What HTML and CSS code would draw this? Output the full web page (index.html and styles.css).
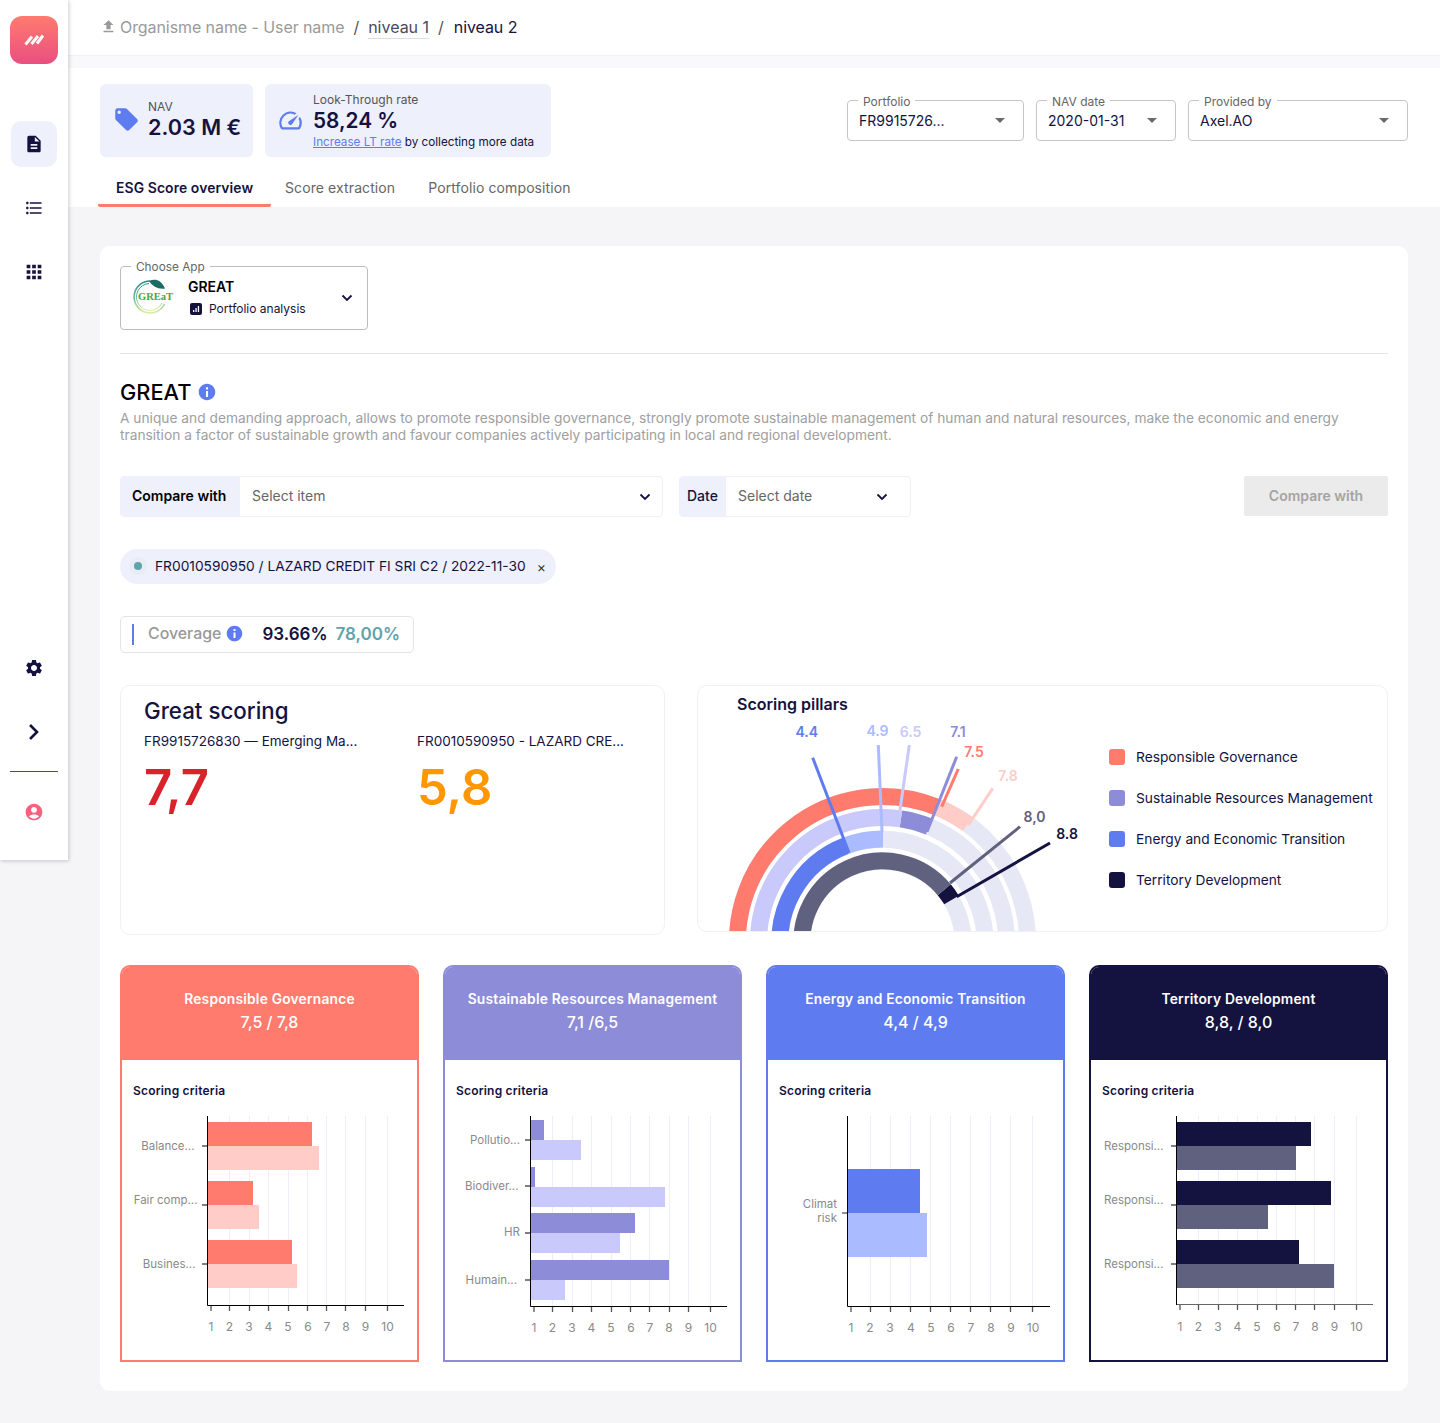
FILE: index.html
```html
<!DOCTYPE html>
<html lang="en">
<head>
<meta charset="utf-8">
<title>ESG Score overview</title>
<link rel="stylesheet" href="styles.css">
</head>
<body>
<div class="app">
  <aside class="sidebar">
    <div class="side-top">
      <div class="logo">
        <svg viewBox="0 0 48 48" width="48" height="48"><path class="logo-mark" d="M15.500 28.500L22 20.500M21.500 28L28 20M27 27.500L33 19.500"/></svg>
      </div>
      <nav class="side-nav">
        <a class="side-item active"><svg class="ico20" viewBox="0 0 24 24"><path d="M14 2H6c-1.1 0-1.99.9-1.99 2L4 20c0 1.1.89 2 1.99 2H18c1.1 0 2-.9 2-2V8l-6-6zm2 16H8v-2h8v2zm0-4H8v-2h8v2zm-3-5V3.5L18.5 9H13z"/></svg></a>
        <a class="side-item"><svg class="ico20" viewBox="0 0 24 24"><path d="M4 10.5c-.83 0-1.5.67-1.5 1.5s.67 1.5 1.5 1.5 1.5-.67 1.5-1.5-.67-1.5-1.5-1.5zm0-6c-.83 0-1.5.67-1.5 1.5S3.17 7.5 4 7.5 5.5 6.83 5.5 6 4.83 4.5 4 4.5zm0 12c-.83 0-1.5.68-1.5 1.5s.68 1.5 1.5 1.5 1.5-.68 1.5-1.5-.67-1.5-1.5-1.5zM7 19h14v-2H7v2zm0-6h14v-2H7v2zm0-8v2h14V5H7z"/></svg></a>
        <a class="side-item"><svg class="ico24" viewBox="0 0 24 24"><path d="M4 8h4V4H4v4zm6 12h4v-4h-4v4zm-6 0h4v-4H4v4zm0-6h4v-4H4v4zm6 0h4v-4h-4v4zm6-10v4h4V4h-4zm-6 4h4V4h-4v4zm6 6h4v-4h-4v4zm0 6h4v-4h-4v4z"/></svg></a>
      </nav>
    </div>
    <div class="side-bottom">
      <a class="side-item"><svg class="ico20" viewBox="0 0 24 24"><path d="M19.14 12.94c.04-.3.06-.61.06-.94 0-.32-.02-.64-.07-.94l2.03-1.58c.18-.14.23-.41.12-.61l-1.92-3.32c-.12-.22-.37-.29-.59-.22l-2.39.96c-.5-.38-1.03-.7-1.62-.94l-.36-2.54c-.04-.24-.24-.41-.48-.41h-3.84c-.24 0-.43.17-.47.41l-.36 2.54c-.59.24-1.13.57-1.62.94l-2.39-.96c-.22-.08-.47 0-.59.22L2.74 8.87c-.12.21-.08.47.12.61l2.03 1.58c-.05.3-.09.63-.09.94s.02.64.07.94l-2.03 1.58c-.18.14-.23.41-.12.61l1.92 3.32c.12.22.37.29.59.22l2.39-.96c.5.38 1.03.7 1.62.94l.36 2.54c.05.24.24.41.48.41h3.84c.24 0 .44-.17.47-.41l.36-2.54c.59-.24 1.13-.56 1.62-.94l2.39.96c.22.08.47 0 .59-.22l1.92-3.32c.12-.22.07-.47-.12-.61l-2.01-1.58zM12 15.6c-1.98 0-3.6-1.62-3.6-3.6s1.62-3.6 3.6-3.6 3.6 1.62 3.6 3.6-1.62 3.6-3.6 3.6z"/></svg></a>
      <a class="side-item"><svg class="ico20" viewBox="0 0 20 20"><path class="chev" d="M6 3l7 7-7 7"/></svg></a>
      <hr class="side-rule">
      <a class="side-item"><svg class="ico20 pink" viewBox="0 0 24 24"><path d="M12 2C6.48 2 2 6.48 2 12s4.48 10 10 10 10-4.48 10-10S17.52 2 12 2zm0 4c1.93 0 3.5 1.57 3.5 3.5S13.93 13 12 13s-3.5-1.57-3.5-3.5S10.07 6 12 6zm0 14c-2.03 0-4.43-.82-6.14-2.88C7.55 15.8 9.68 15 12 15s4.45.8 6.14 2.12C16.43 19.18 14.03 20 12 20z"/></svg></a>
    </div>
  </aside>

  <div class="main">
    <header class="crumbs">
      <svg class="crumb-ico" viewBox="0 0 24 24"><path d="M5 20h14v-2H5v2zm0-10h4v6h6v-6h4l-7-7-7 7z"/></svg>
      <span class="crumb-muted">Organisme name - User name</span>
      <span class="crumb-sep">/</span>
      <span class="crumb-link">niveau 1</span>
      <span class="crumb-sep">/</span>
      <span class="crumb-now">niveau 2</span>
    </header>
    <div class="strip"></div>

    <section class="top">
      <div class="top-row">
        <div class="stats">
          <div class="stat stat-nav">
            <svg class="stat-ico" viewBox="0 0 24 24"><path d="M21.41 11.58l-9-9C12.05 2.22 11.55 2 11 2H4c-1.1 0-2 .9-2 2v7c0 .55.22 1.05.59 1.42l9 9c.36.36.86.58 1.41.58.55 0 1.05-.22 1.41-.59l7-7c.37-.36.59-.86.59-1.41 0-.55-.23-1.06-.59-1.42zM5.500 7C4.670 7 4 6.330 4 5.500S4.670 4 5.500 4 7 4.670 7 5.500 6.330 7 5.500 7z"/></svg>
            <div class="stat-text">
              <div class="stat-label">NAV</div>
              <div class="stat-value">2.03 M €</div>
            </div>
          </div>
          <div class="stat stat-lt">
            <svg class="stat-ico" viewBox="0 0 24 24"><path d="M20.38 8.57l-1.23 1.85a8 8 0 0 1-.22 7.58H5.07A8 8 0 0 1 15.58 6.85l1.85-1.23A10 10 0 0 0 3.35 19a2 2 0 0 0 1.72 1h13.85a2 2 0 0 0 1.74-1 10 10 0 0 0-.27-10.44zm-9.79 6.84a2 2 0 0 0 2.83 0l5.66-8.49-8.49 5.66a2 2 0 0 0 0 2.83z"/></svg>
            <div class="stat-text">
              <div class="stat-label">Look-Through rate</div>
              <div class="stat-value stat-value-lt">58,24 %</div>
              <div class="stat-note"><a class="stat-link">Increase LT rate</a> by collecting more data</div>
            </div>
          </div>
        </div>
        <div class="selects">
          <div class="select sel-portfolio"><span class="float-label">Portfolio</span><span>FR9915726...</span><i class="caret"></i></div>
          <div class="select sel-date"><span class="float-label">NAV date</span><span>2020-01-31</span><i class="caret"></i></div>
          <div class="select sel-prov"><span class="float-label">Provided by</span><span>Axel.AO</span><i class="caret"></i></div>
        </div>
      </div>
      <div class="tabs">
        <a class="tab tab-active">ESG Score overview</a>
        <a class="tab">Score extraction</a>
        <a class="tab">Portfolio composition</a>
      </div>
    </section>

    <div class="content">
      <div class="panel">
        <div class="app-select">
          <span class="float-label">Choose App</span>
          <svg class="great-logo" viewBox="131 277 44 40">
            <defs><linearGradient id="ringg" x1="0" y1="0" x2="0" y2="1"><stop offset="0" stop-color="#2a8f86"/><stop offset=".55" stop-color="#6fc0a0"/><stop offset="1" stop-color="#dcec9c"/></linearGradient></defs>
            <path class="great-ring" d="M150 281A16 16 0 1 0 164.500 304"/>
            <path class="great-ring great-ring-in" d="M149 283.500A13.500 13.500 0 1 0 162 303"/>
            <path class="great-leaf" d="M149 281c6-2.500 12-1.500 16 7.500-6.500 1-12.500-2-16-7.500z"/>
            <text class="great-word" x="155.500" y="300">GREaT</text>
          </svg>
          <div class="app-text">
            <div class="app-name">GREAT</div>
            <div class="app-sub">
              <svg class="app-sub-ico" viewBox="0 0 12 12"><path fill-rule="evenodd" d="M2 0h8a2 2 0 0 1 2 2v8a2 2 0 0 1-2 2H2a2 2 0 0 1-2-2V2a2 2 0 0 1 2-2zM3 7v2h1.300V7zM5.400 5v4h1.300V5zM7.800 3v6h1.300V3z"/></svg>
              <span>Portfolio analysis</span>
            </div>
          </div>
          <svg class="chev-down" viewBox="0 0 12 8"><path d="M1.500 1.500L6 6l4.500-4.500"/></svg>
        </div>

        <hr class="divider">

        <div class="title-row">
          <h1 class="title">GREAT</h1>
          <svg class="info" viewBox="0 0 24 24"><path d="M12 1C5.900 1 1 5.900 1 12s4.900 11 11 11 11-4.900 11-11S18.100 1 12 1zm1.400 17.500h-2.800v-8h2.800v8zm0-10h-2.800V5.800h2.800v2.700z"/></svg>
        </div>
        <p class="desc">A unique and demanding approach, allows to promote responsible governance, strongly promote sustainable management of human and natural resources, make the economic and energy transition a factor of sustainable growth and favour companies actively participating in local and regional development.</p>

        <div class="compare">
          <div class="field field-item">
            <span class="field-label">Compare with</span>
            <span class="field-value">Select item</span>
            <svg class="chev-down" viewBox="0 0 12 8"><path d="M1.500 1.500L6 6l4.500-4.500"/></svg>
          </div>
          <div class="field field-date">
            <span class="field-label field-label-date">Date</span>
            <span class="field-value">Select date</span>
            <svg class="chev-down" viewBox="0 0 12 8"><path d="M1.500 1.500L6 6l4.500-4.500"/></svg>
          </div>
          <button class="compare-btn">Compare with</button>
        </div>

        <div class="chip-row">
          <div class="chip">
            <span class="chip-dot"></span>
            <span>FR0010590950 / LAZARD CREDIT FI SRI C2 / 2022-11-30</span>
            <span class="chip-x">×</span>
          </div>
        </div>

        <div class="coverage-row">
          <div class="coverage">
            <span class="cov-bar"></span>
            <span class="cov-label">Coverage</span>
            <svg class="info info-sm" viewBox="0 0 24 24"><path d="M12 1C5.900 1 1 5.900 1 12s4.900 11 11 11 11-4.900 11-11S18.100 1 12 1zm1.400 17.500h-2.800v-8h2.800v8zm0-10h-2.800V5.800h2.800v2.700z"/></svg>
            <span class="cov-a">93.66%</span>
            <span class="cov-b">78,00%</span>
          </div>
        </div>

        <div class="score-row">
          <div class="score-card">
            <h2 class="score-title">Great scoring</h2>
            <div class="score-cols">
              <div class="score-col">
                <div class="score-name">FR9915726830 — Emerging Ma...</div>
                <div class="score-num num-red">7,7</div>
              </div>
              <div class="score-col">
                <div class="score-name">FR0010590950 - LAZARD CRE...</div>
                <div class="score-num num-orange">5,8</div>
              </div>
            </div>
          </div>

          <div class="pillars">
            <div class="pillars-chart">
              <h2 class="pillars-title">Scoring pillars</h2>
              <svg class="gauge" viewBox="698 720 400 211">
                <g class="arc">
                  <path class="a-bg" d="M739.700 966.700A145 145 0 1 1 1025.300 966.700"/>
                  <path class="a-bg" d="M760.400 963.100A124 124 0 1 1 1004.600 963.100"/>
                  <path class="a-bg" d="M781.500 959.300A102.500 102.500 0 1 1 983.500 959.300"/>
                  <path class="a-bg" d="M803.200 955.500A80.500 80.500 0 1 1 961.800 955.500"/>
                  <path class="a-red2" d="M936.300 806.900A145 145 0 0 1 967.800 824.200"/>
                  <path class="a-red" d="M739.700 966.700A145 145 0 0 1 936.300 806.900"/>
                  <path class="a-vio2" d="M901 818.900A124 124 0 0 1 929 826.500"/>
                  <path class="a-vio" d="M760.400 963.100A124 124 0 0 1 901 818.900"/>
                  <path class="a-blu2" d="M845.800 845.800A102.500 102.500 0 0 1 883 839"/>
                  <path class="a-blu" d="M781.500 959.300A102.500 102.500 0 0 1 845.800 845.800"/>
                  <path class="a-ink2" d="M944.200 889.700A80.500 80.500 0 0 1 951.500 900"/>
                  <path class="a-ink" d="M803.200 955.500A80.500 80.500 0 0 1 944.200 889.700"/>
                </g>
                <g class="needles">
                  <path class="n-blu" d="M812.700 757.700L849 852.700"/>
                  <path class="n-blu2" d="M878.300 745L882 831.700"/>
                  <path class="n-vio2" d="M909.300 745L900 810"/>
                  <path class="n-red" d="M958.300 769L941.700 806.700"/>
                  <path class="n-vio" d="M956.700 756.700L927 831.700"/>
                  <path class="n-red2" d="M992.700 788.300L968.300 825"/>
                  <path class="n-ink2" d="M1020 826.700L950 883"/>
                  <path class="n-ink" d="M1050 843L956.700 896.700"/>
                </g>
                <g class="g-labels">
                  <text class="t-blu" x="806.700" y="737">4.4</text>
                  <text class="t-blu2" x="877.500" y="736">4.9</text>
                  <text class="t-vio2" x="910.500" y="737">6.5</text>
                  <text class="t-vio" x="958" y="737">7.1</text>
                  <text class="t-red" x="974" y="757">7.5</text>
                  <text class="t-red2" x="1008" y="781">7.8</text>
                  <text class="t-ink2" x="1034.500" y="822">8,0</text>
                  <text class="t-ink" x="1067" y="839">8.8</text>
                </g>
              </svg>
            </div>
            <ul class="legend">
              <li><i class="sw sw-red"></i>Responsible Governance</li>
              <li><i class="sw sw-vio"></i>Sustainable Resources Management</li>
              <li><i class="sw sw-blu"></i>Energy and Economic Transition</li>
              <li><i class="sw sw-ink"></i>Territory Development</li>
            </ul>
          </div>
        </div>

        <div class="pillar-grid">
          <article class="pcard pc-red">
            <header class="pcard-head"><div class="pcard-name">Responsible Governance</div><div class="pcard-score">7,5 / 7,8</div></header>
            <div class="pcard-body">
              <h3 class="criteria">Scoring criteria</h3>
              <svg class="bars" viewBox="122 1110 295 235">
                <path class="grid" d="M229.500 1116V1305M249.500 1116V1305M268.500 1116V1305M288.500 1116V1305M307.500 1116V1305M326.500 1116V1305M345.500 1116V1305M365.500 1116V1305M387.500 1116V1305"/>
                <rect class="b1" x="208" y="1122" width="104" height="24"/><rect class="b2" x="208" y="1146" width="111" height="24"/>
                <rect class="b1" x="208" y="1181" width="45" height="24"/><rect class="b2" x="208" y="1205" width="51" height="24"/>
                <rect class="b1" x="208" y="1240" width="84" height="24"/><rect class="b2" x="208" y="1264" width="89" height="24"/>
                <path class="ytick" d="M202 1146h5M202 1205h5M202 1264h5"/>
                <path class="axis" d="M207.500 1116V1305.500H404"/>
                <path class="xtick" d="M211 1306v5M229.500 1306v5M249.500 1306v5M268.500 1306v5M288.500 1306v5M307.500 1306v5M326.500 1306v5M345.500 1306v5M365.500 1306v5M387.500 1306v5"/>
                <g class="ylab"><text x="194.500" y="1150">Balance...</text><text x="197.500" y="1204">Fair comp...</text><text x="195.500" y="1268">Busines...</text></g>
                <g class="xlab"><text x="211" y="1331">1</text><text x="229.500" y="1331">2</text><text x="249" y="1331">3</text><text x="268.500" y="1331">4</text><text x="288" y="1331">5</text><text x="308" y="1331">6</text><text x="327" y="1331">7</text><text x="346" y="1331">8</text><text x="365.500" y="1331">9</text><text x="387.500" y="1331">10</text></g>
              </svg>
            </div>
          </article>

          <article class="pcard pc-vio">
            <header class="pcard-head"><div class="pcard-name">Sustainable Resources Management</div><div class="pcard-score">7,1 /6,5</div></header>
            <div class="pcard-body">
              <h3 class="criteria">Scoring criteria</h3>
              <svg class="bars" viewBox="445 1110 295 235">
                <path class="grid" d="M552.500 1116V1306M572.500 1116V1306M591.500 1116V1306M611.500 1116V1306M630.500 1116V1306M649.500 1116V1306M669.500 1116V1306M688.500 1116V1306M710.500 1116V1306"/>
                <rect class="b1" x="531" y="1120" width="13" height="20"/><rect class="b2" x="531" y="1140" width="50" height="20"/>
                <rect class="b1" x="531" y="1167" width="4" height="20"/><rect class="b2" x="531" y="1187" width="134" height="20"/>
                <rect class="b1" x="531" y="1213" width="104" height="20"/><rect class="b2" x="531" y="1233" width="89" height="20"/>
                <rect class="b1" x="531" y="1260" width="138" height="20"/><rect class="b2" x="531" y="1280" width="34" height="20"/>
                <path class="ytick" d="M525 1140h5M525 1186h5M525 1233h5M525 1280h5"/>
                <path class="axis" d="M530.500 1116V1306.500H727"/>
                <path class="xtick" d="M534 1307v5M552.500 1307v5M572.500 1307v5M591.500 1307v5M611.500 1307v5M630.500 1307v5M649.500 1307v5M669.500 1307v5M688.500 1307v5M710.500 1307v5"/>
                <g class="ylab"><text x="520" y="1144">Pollutio...</text><text x="518.500" y="1190">Biodiver...</text><text x="520" y="1236">HR</text><text x="517" y="1284">Humain...</text></g>
                <g class="xlab"><text x="534" y="1332">1</text><text x="552.500" y="1332">2</text><text x="572" y="1332">3</text><text x="591.500" y="1332">4</text><text x="611" y="1332">5</text><text x="631" y="1332">6</text><text x="650" y="1332">7</text><text x="669" y="1332">8</text><text x="688.500" y="1332">9</text><text x="710.500" y="1332">10</text></g>
              </svg>
            </div>
          </article>

          <article class="pcard pc-blu">
            <header class="pcard-head"><div class="pcard-name">Energy and Economic Transition</div><div class="pcard-score">4,4 / 4,9</div></header>
            <div class="pcard-body">
              <h3 class="criteria">Scoring criteria</h3>
              <svg class="bars" viewBox="768 1110 295 235">
                <path class="grid" d="M870.500 1116V1306M890.500 1116V1306M910.500 1116V1306M930.500 1116V1306M950.500 1116V1306M970.500 1116V1306M990.500 1116V1306M1010.500 1116V1306M1032.500 1116V1306"/>
                <rect class="b1" x="848" y="1169" width="72" height="44"/><rect class="b2" x="848" y="1213" width="79" height="44"/>
                <path class="ytick" d="M842 1213h5"/>
                <path class="axis" d="M847.500 1116V1306.500H1050"/>
                <path class="xtick" d="M851 1307v5M870.500 1307v5M890.500 1307v5M910.500 1307v5M930.500 1307v5M950.500 1307v5M970.500 1307v5M990.500 1307v5M1010.500 1307v5M1032.500 1307v5"/>
                <g class="ylab"><text x="837" y="1208">Climat</text><text x="837" y="1222">risk</text></g>
                <g class="xlab"><text x="851" y="1332">1</text><text x="870" y="1332">2</text><text x="890" y="1332">3</text><text x="911" y="1332">4</text><text x="931" y="1332">5</text><text x="951" y="1332">6</text><text x="971" y="1332">7</text><text x="991" y="1332">8</text><text x="1011" y="1332">9</text><text x="1033" y="1332">10</text></g>
              </svg>
            </div>
          </article>

          <article class="pcard pc-ink">
            <header class="pcard-head"><div class="pcard-name">Territory Development</div><div class="pcard-score">8,8, / 8,0</div></header>
            <div class="pcard-body">
              <h3 class="criteria">Scoring criteria</h3>
              <svg class="bars" viewBox="1091 1110 295 235">
                <path class="grid" d="M1198.500 1116V1304M1218.500 1116V1304M1237.500 1116V1304M1257.500 1116V1304M1276.500 1116V1304M1295.500 1116V1304M1314.500 1116V1304M1334.500 1116V1304M1356.500 1116V1121M1356.500 1121V1304"/>
                <rect class="b1" x="1177" y="1122" width="134" height="24"/><rect class="b2" x="1177" y="1146" width="119" height="24"/>
                <rect class="b1" x="1177" y="1181" width="154" height="24"/><rect class="b2" x="1177" y="1205" width="91" height="24"/>
                <rect class="b1" x="1177" y="1240" width="122" height="24"/><rect class="b2" x="1177" y="1264" width="157" height="24"/>
                <path class="ytick" d="M1171 1146h5M1171 1205h5M1171 1264h5"/>
                <path class="axis" d="M1176.500 1116V1305"/>
                <path class="axis-x" d="M1177 1304.500H1373"/>
                <path class="xtick" d="M1180 1305v5M1198.500 1305v5M1218.500 1305v5M1237.500 1305v5M1257.500 1305v5M1276.500 1305v5M1295.500 1305v5M1314.500 1305v5M1334.500 1305v5M1356.500 1305v5"/>
                <g class="ylab"><text x="1163.500" y="1150">Responsi...</text><text x="1163.500" y="1204">Responsi...</text><text x="1163.500" y="1268">Responsi...</text></g>
                <g class="xlab"><text x="1180" y="1331">1</text><text x="1198.500" y="1331">2</text><text x="1218" y="1331">3</text><text x="1237.500" y="1331">4</text><text x="1257" y="1331">5</text><text x="1277" y="1331">6</text><text x="1296" y="1331">7</text><text x="1315" y="1331">8</text><text x="1334.500" y="1331">9</text><text x="1356.500" y="1331">10</text></g>
              </svg>
            </div>
          </article>
        </div>
      </div>
    </div>
  </div>
</div>
</body>
</html>
```
FILE: styles.css
```css
* { box-sizing: border-box; }
html, body { margin: 0; padding: 0; }
body {
  background: #f5f5f8;
  font-family: Inter, "Liberation Sans", sans-serif;
  color: #14123f;
  font-size: 14px;
}
h1, h2, h3, p, ul { margin: 0; padding: 0; }
svg { display: block; }

.app { display: flex; align-items: flex-start; min-height: 1423px; }

/* Sidebar */
.sidebar {
  flex: 0 0 68px;
  height: 860px;
  background: #fff;
  box-shadow: 1px 1px 4px rgba(0,0,0,.2);
  display: flex;
  flex-direction: column;
  justify-content: space-between;
  padding: 16px 10px 25px;
  position: relative;
  z-index: 2;
}
.logo {
  width: 48px; height: 48px;
  border-radius: 12px;
  background: linear-gradient(180deg, #ff7b6e, #e94f80);
}
.logo-mark { fill: none; stroke: #fff; stroke-width: 3; opacity: .95; }
.side-nav { display: flex; flex-direction: column; gap: 18px; margin-top: 57px; }
.side-bottom { display: flex; flex-direction: column; gap: 18px; }
.side-item {
  width: 46px; height: 46px; margin-left: 1px;
  display: flex; align-items: center; justify-content: center;
  border-radius: 10px;
}
.side-item.active { background: #eef0fb; }
.ico20 { width: 20px; height: 20px; fill: #14123f; }
.ico24 { width: 22px; height: 22px; fill: #14123f; }
.pink { fill: #fb5f7e; }
.chev { fill: none; stroke: #14123f; stroke-width: 2.6; }
.side-rule { border: 0; height: 1px; background: #4a4a68; margin: -2px 0 -1px; width: 48px; }

/* Main */
.main { flex: 1; min-width: 0; }
.crumbs {
  height: 56px;
  background: #fff;
  border-bottom: 1px solid #f0f0f6;
  display: flex; align-items: center; gap: 9px;
  padding: 0 32px 2px 32px;
  font-size: 16px;
  letter-spacing: -.08px;
}
.crumb-ico { width: 17px; height: 17px; fill: #9a9a9a; margin-right: -6px; }
.crumb-muted { color: #9a9a9a; }
.crumb-sep { color: #555; }
.crumb-link { color: #4a4a5c; border-bottom: 1px solid #ddd; line-height: 22px; margin-top: 1px; letter-spacing: 0; }
.crumb-now { color: #14123f; margin-left: 1px; }
.strip { height: 12px; background: #f9f9fb; }

.top { background: #fff; height: 139px; padding: 16px 32px 0 30px; }
.top-row { display: flex; justify-content: space-between; margin-left: 2px; }
.stats { display: flex; gap: 12px; }
.stat {
  background: #eef0fb;
  border-radius: 6px;
  height: 73px;
  display: flex; align-items: center;
  color: #14123f;
}
.stat-nav .stat-text { margin-top: -2px; }
.stat-nav { width: 153px; padding-left: 13px; gap: 8px; }
.stat-lt { width: 286px; padding-left: 12px; gap: 9px; }
.stat-ico { fill: #5e7cf0; flex: none; }
.stat-nav .stat-ico { width: 27px; height: 27px; margin-top: -2px; }
.stat-lt .stat-ico { width: 27px; height: 27px; }
.stat-label { font-size: 12px; color: #555; line-height: 15px; }
.stat-value { font-size: 21.6px; font-weight: 600; line-height: 26px; }
.stat-value-lt { font-size: 20.8px; margin-top: 1px; }
.stat-note { font-size: 11.7px; line-height: 15px; margin-top: 1px; }
.stat-link { color: #5e7cf0; text-decoration: underline; }

.selects { display: flex; gap: 12px; margin-top: 16px; }
.select {
  position: relative;
  height: 41px;
  border: 1px solid #c6c6c6;
  border-radius: 4px;
  padding: 0 12px 0 11px;
  display: flex; align-items: center; justify-content: space-between;
  font-size: 14px;
}
.sel-portfolio { width: 177px; }
.sel-date { width: 140px; }
.sel-prov { width: 220px; }
.caret {
  width: 0; height: 0; margin-right: 6px;
  border-left: 5px solid transparent; border-right: 5px solid transparent;
  border-top: 5px solid #6b6b6b;
}
.float-label {
  position: absolute; top: -6px; left: 10px;
  background: #fff;
  padding: 0 5px;
  font-size: 12px; line-height: 14px;
  color: #666;
}

.tabs { display: flex; margin-top: 16px; height: 34px; }
.tab { font-size: 14px; color: #666; height: 34px; line-height: 30px; padding: 0 16px 0 17px; letter-spacing: .1px; }
.tab-active { color: #14123f; font-size: 13.9px; font-weight: 600; border-bottom: 3px solid #ff7b6e; width: 173px; padding-left: 18px; padding-right: 0; border-radius: 0 0 2px 2px; }
.tab-active + .tab { padding-left: 14px; }

/* Panel */
.content { padding: 39px 32px 32px; }
.panel { background: #fff; border-radius: 10px; height: 1145px; padding: 20px; }

.app-select {
  position: relative;
  width: 248px; height: 64px;
  border: 1px solid #bdbdbd;
  border-radius: 4px;
  display: flex; align-items: center;
  padding: 0 14px 0 10px;
}
.app-select .float-label { left: 10px; top: -7px; font-size: 11.8px; }
.great-logo { width: 44px; height: 40px; flex: none; margin-top: -2px; }
.great-ring { fill: none; stroke: url(#ringg); stroke-width: 1.600; }
.great-ring-in { stroke-width: 1; }
.great-leaf { fill: #1d6b62; }
.great-word { font-family: "Liberation Serif", serif; font-size: 10.5px; font-weight: 700; fill: #3fa845; text-anchor: middle; }
.app-text { margin-left: 13px; flex: 1; padding-bottom: 2px; }
.app-name { font-size: 14px; font-weight: 600; color: #000; line-height: 18px; }
.app-sub { display: flex; align-items: center; gap: 7px; font-size: 12px; line-height: 16px; margin-top: 5px; margin-left: 2px; }
.app-sub-ico { width: 12px; height: 12px; fill: #14123f; }
.chev-down { width: 12px; height: 8px; fill: none; stroke: #14123f; stroke-width: 1.8; flex: none; }

.divider { border: 0; height: 1px; background: #e6e6e6; margin: 23px 0 0; }
.title-row { display: flex; align-items: center; gap: 7px; margin-top: 25px; height: 26px; }
.title { font-size: 21.8px; font-weight: 500; color: #000; line-height: 26px; }
.info { width: 18px; height: 18px; fill: #5e7cf0; }
.desc { color: #a0a0a0; font-size: 13.75px; line-height: 17px; margin-top: 5px; }

.compare { display: flex; gap: 16px; margin-top: 32px; align-items: flex-start; }
.field {
  height: 41px;
  border: 1px solid #eef0fb;
  border-radius: 4px;
  display: flex; align-items: center;
  overflow: hidden;
}
.field-item { width: 543px; }
.field-date { width: 232px; }
.field-label {
  background: #eef0fb; align-self: stretch;
  display: flex; align-items: center;
  padding: 0 11px 2px; font-size: 14px; font-weight: 600; color: #000; width: 119px; flex: none;
}
.field-label-date { width: 46px; padding: 0 7px 2px; font-weight: 500; color: #14123f; }
.field-value { flex: 1; padding: 0 0 2px 12px; color: #666; }
.field .chev-down { margin-right: 11px; }
.field-date .chev-down { margin-right: 22px; }
.compare-btn {
  margin-left: auto;
  width: 144px; height: 40px;
  border: 0; border-radius: 2px;
  background: #ebebeb; color: #a4a4a4;
  padding-bottom: 2px;
  font: 600 14px Inter, "Liberation Sans", sans-serif;
}

.chip-row { display: flex; margin-top: 32px; }
.chip {
  height: 35px; width: 436px;
  background: #eef0fb; border-radius: 18px;
  display: flex; align-items: center;
  padding: 0 0 1px 14px;
  font-size: 13.75px;
}
.chip-dot { width: 8px; height: 8px; border-radius: 50%; background: #5fa3ab; margin-right: 13px; box-shadow: 0 0 0 5px #e9ecf7; }
.chip-x { margin-left: 11px; color: #333; font-size: 14px; }

.coverage-row { display: flex; margin-top: 32px; }
.coverage {
  height: 37px; width: 294px;
  border: 1px solid #e4e4e4; border-radius: 5px;
  display: flex; align-items: center;
  padding: 0 0 2px 11px;
}
.cov-bar { width: 2px; height: 21px; background: #5e7cf0; margin: 2px 14px 0 0; }
.cov-label { font-size: 15.9px; font-weight: 500; color: #999; margin-right: 5px; }
.info-sm { width: 17px; height: 17px; }
.cov-a { font-size: 17px; font-weight: 600; margin-left: 19px; }
.cov-b { font-size: 17px; font-weight: 600; color: #5fa3ab; margin-left: 8px; }

.score-row { display: flex; gap: 32px; margin-top: 32px; align-items: flex-start; }
.score-card {
  width: 545px; height: 250px;
  border: 1px solid #f0f0f6; border-radius: 10px;
  padding: 11px 23px 0;
}
.score-title { font-size: 22.3px; font-weight: 500; line-height: 28px; }
.score-cols { display: flex; margin-top: 7px; }
.score-col { flex: 0 0 273px; }
.score-name { font-size: 13.5px; line-height: 18px; }
.score-num { font-size: 49px; font-weight: 600; line-height: 60px; margin-top: 8px; }
.num-red { color: #d8232a; }
.num-orange { color: #ff9800; }

.pillars {
  width: 691px; height: 247px;
  border: 1px solid #f0f0f6; border-radius: 10px;
  display: flex;
  overflow: hidden;
}
.pillars-chart { width: 400px; flex: none; }
.pillars-title { font-size: 16px; font-weight: 600; line-height: 20px; padding: 8px 0 0 39px; height: 34px; }
.gauge { width: 400px; height: 211px; }
.arc path { fill: none; stroke-width: 17; }
.needles path { fill: none; stroke-width: 3; }
.a-bg { stroke: #e6e8f5; }
.a-red { stroke: #ff7b6e; } .a-red2 { stroke: #ffccc7; }
.a-vio { stroke: #c9c9fb; } .a-vio2 { stroke: #8d8cd8; }
.a-blu { stroke: #5e7cf0; } .a-blu2 { stroke: #aabcff; }
.a-ink { stroke: #60607f; } .a-ink2 { stroke: #14123f; }
.n-red { stroke: #ff7b6e; } .n-red2 { stroke: #ffccc7; }
.n-vio { stroke: #8d8cd8; } .n-vio2 { stroke: #c9c9fb; }
.n-blu { stroke: #5e7cf0; } .n-blu2 { stroke: #aabcff; }
.n-ink { stroke: #14123f; } .n-ink2 { stroke: #60607f; }
.g-labels text { font-size: 14px; font-weight: 600; text-anchor: middle; }
.t-red { fill: #ff7b6e; } .t-red2 { fill: #ffccc7; }
.t-vio { fill: #8d8cd8; } .t-vio2 { fill: #c9c9fb; }
.t-blu { fill: #5e7cf0; } .t-blu2 { fill: #aabcff; }
.t-ink { fill: #14123f; } .t-ink2 { fill: #60607f; }

.legend { list-style: none; padding: 62px 0 0 11px; display: flex; flex-direction: column; gap: 23px; }
.legend li { display: flex; align-items: center; gap: 11px; font-size: 13.75px; line-height: 18px; white-space: nowrap; }
.sw { width: 16px; height: 16px; border-radius: 3px; flex: none; }
.sw-red { background: #ff7b6e; }
.sw-vio { background: #8d8cd8; }
.sw-blu { background: #5e7cf0; }
.sw-ink { background: #14123f; }

.pillar-grid { display: grid; grid-template-columns: repeat(4, 299px); gap: 24px; margin-top: 30px; }
.pcard { height: 397px; border: 2px solid; border-radius: 10px 10px 0 0; overflow: hidden; }
.pcard-head {
  height: 95px; color: #fff; text-align: center;
  padding: 25px 2px 0;
  margin: -2px -2px 0;
}
.pcard-name { font-size: 13.8px; font-weight: 600; line-height: 18px; letter-spacing: .2px; }
.pcard-score { font-size: 16px; font-weight: 500; line-height: 20px; margin-top: 4px; }
.pc-red { border-color: #ff7b6e; } .pc-red .pcard-head { background: #ff7b6e; }
.pc-vio { border-color: #8d8cd8; } .pc-vio .pcard-head { background: #8d8cd8; }
.pc-blu { border-color: #5e7cf0; } .pc-blu .pcard-head { background: #5e7cf0; }
.pc-ink { border-color: #14123f; } .pc-ink .pcard-head { background: #14123f; }
.criteria { font-size: 12px; font-weight: 600; line-height: 16px; letter-spacing: .2px; padding: 23px 0 0 11px; height: 50px; }
.bars { width: 295px; height: 235px; }
.grid { stroke: #eeeef8; stroke-width: 1; fill: none; }
.axis { stroke: #000; stroke-width: 1; fill: none; }
.axis-x { stroke: #666; stroke-width: 1; fill: none; }
.ytick, .xtick { stroke: #555; stroke-width: 1.300; fill: none; }
.ylab text { font-size: 11.5px; fill: #8a8a8a; text-anchor: end; }
.xlab text { font-size: 12px; fill: #8a8a8a; text-anchor: middle; }
.pc-red .b1 { fill: #ff7b6e; } .pc-red .b2 { fill: #ffccc7; }
.pc-vio .b1 { fill: #8d8cd8; } .pc-vio .b2 { fill: #c9c9fb; }
.pc-blu .b1 { fill: #5e7cf0; } .pc-blu .b2 { fill: #aabcff; }
.pc-ink .b1 { fill: #14123f; } .pc-ink .b2 { fill: #60607f; }
```
